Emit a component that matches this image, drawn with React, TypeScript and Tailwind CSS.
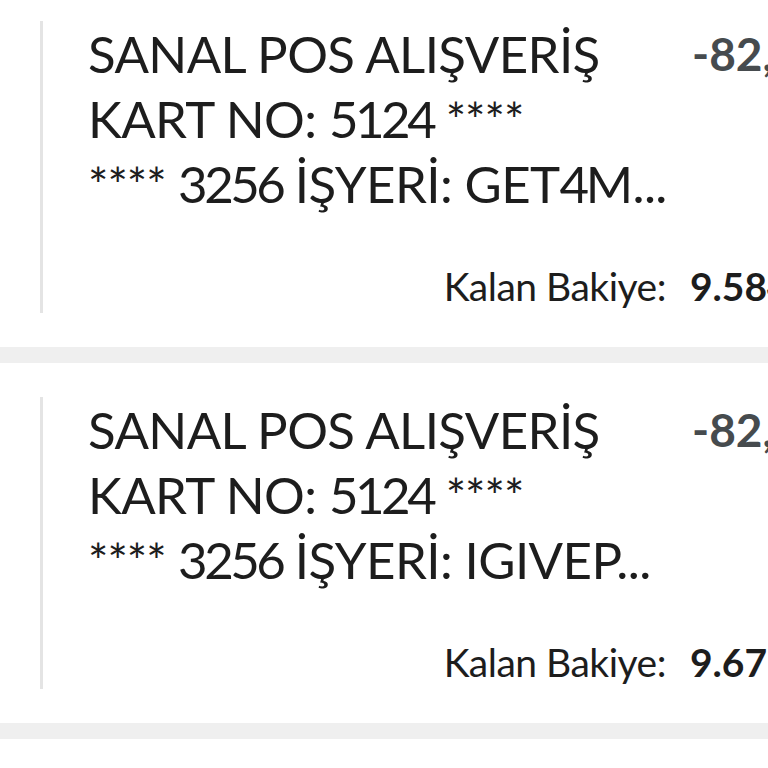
import React from 'react'

type Txn = {
  lines: string[]
  amount: string
  balance: string
}

const txns: Txn[] = [
  {
    lines: ['SANAL POS ALIŞVERİŞ', 'KART NO: 5124 ****', '**** 3256 İŞYERİ: GET4M...'],
    amount: '-82,99 TL',
    balance: '9.584,21 TL',
  },
  {
    lines: ['SANAL POS ALIŞVERİŞ', 'KART NO: 5124 ****', '**** 3256 İŞYERİ: IGIVEP...'],
    amount: '-82,50 TL',
    balance: '9.671,20 TL',
  },
]

// masked card digits and numbers get their own spans: the stars are drawn
// a bit smaller and the figures set tighter than the letters
const Line = ({ text }: { text: string }) => {
  const parts = text.split(/(\*\*\*\*|\d+)/)
  return (
    <div className="whitespace-nowrap">
      {parts.map((p, i) => {
        if (p === '****')
          return (
            <span key={i} className="text-[48px] leading-none tracking-[-1px]">
              ****
            </span>
          )
        if (/^\d+$/.test(p))
          return (
            <span key={i} className="tracking-[-3.5px]">
              {p}
            </span>
          )
        return <span key={i}>{p}</span>
      })}
    </div>
  )
}

const TxnCard = ({ txn }: { txn: Txn }) => (
  <div className="h-[360px] pl-[40px] py-[34px] bg-white">
    <div className="h-full border-l-[3px] border-[#e4e4e4] pl-[45px] flex flex-col justify-between">
      <div className="flex">
        <div className="w-[604px] text-[51px] leading-[65px] tracking-[-0.6px] text-[#1d1d1d]">
          {txn.lines.map((l, i) => (
            <Line key={i} text={l} />
          ))}
        </div>
        <div className="text-[46px] leading-[65px] font-bold text-[#464b4e] whitespace-nowrap">
          {txn.amount}
        </div>
      </div>
      <div className="flex justify-end items-baseline gap-[24px] pr-[64px] pb-[3px] text-[39px] leading-[48px] text-[#1d1d1d] whitespace-nowrap">
        <span className="tracking-[-0.5px]">Kalan Bakiye:</span>
        <span className="font-bold">{txn.balance}</span>
      </div>
    </div>
  </div>
)

export default function App() {
  return (
    <div className="w-[768px] h-[768px] overflow-hidden bg-white font-['Lato',sans-serif]">
      <div className="w-[960px] -mt-[13px] flex flex-col">
        {txns.map((t, i) => (
          <React.Fragment key={i}>
            <TxnCard txn={t} />
            <div className="h-[16px] bg-[#efefef]" />
          </React.Fragment>
        ))}
        <TxnCard txn={txns[0]} />
      </div>
    </div>
  )
}
